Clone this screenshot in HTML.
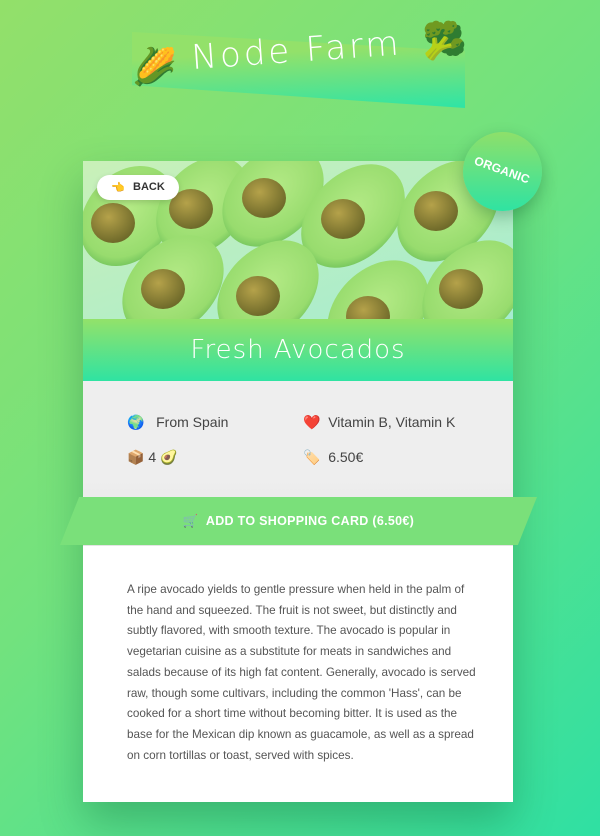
<!DOCTYPE html>
<html><head><meta charset="utf-8"><style>
*{margin:0;padding:0;box-sizing:border-box}
body{width:600px;height:836px;overflow:hidden;font-family:"Liberation Sans","Noto Sans CJK JP",sans-serif;background:linear-gradient(135deg,#93e06a 0%,#72e27e 45%,#2fe0a3 100%);position:relative}
.banner{position:absolute;left:132px;top:32px;width:333px;height:76px;background:linear-gradient(177deg,#93e16a 30%,#2ee4a6 100%);clip-path:polygon(0 0,100% 25%,100% 100%,0 70%)}
.logo{position:absolute;left:193px;top:38px;color:#fff;font-size:34px;letter-spacing:3px;transform:rotate(-4deg);transform-origin:left bottom;font-family:"DejaVu Sans",sans-serif;font-weight:200;white-space:nowrap}
.emo{position:absolute;font-family:"Noto Color Emoji","DejaVu Sans",sans-serif}
.card{position:absolute;left:83px;top:161px;width:430px;height:641px;background:#fff;box-shadow:0 20px 40px rgba(0,80,40,.3)}
.img{position:absolute;left:0;top:0;width:430px;height:158px;overflow:hidden;background:linear-gradient(160deg,#c9f0b8,#a5ecd0)}
.title{position:absolute;left:0;top:158px;width:430px;height:62px;background:linear-gradient(180deg,#93e26a,#2fe3a2);color:#fff;text-align:center;font-size:26px;line-height:62px;letter-spacing:1px;font-family:"DejaVu Sans",sans-serif;font-weight:200}
.info{position:absolute;left:0;top:220px;width:430px;height:165px;background:linear-gradient(180deg,#eeeeee 60%,#e4e4e4);color:#444;font-size:14px}
.info div{position:absolute}
.btn{position:absolute;left:60px;top:497px;width:477px;height:48px;background:#7ae07a;clip-path:polygon(4% 0,100% 0,96% 100%,0 100%);color:#fff;font-weight:bold;font-size:12.5px;text-align:center;line-height:48px;letter-spacing:.3px}
.desc{position:absolute;left:44px;top:419px;width:350px;font-size:11.7px;line-height:20.7px;color:#555;white-space:nowrap}
.back{position:absolute;left:97px;top:175px;width:82px;height:25px;background:#fff;border-radius:13px;font-size:11px;font-weight:bold;color:#333;line-height:25px;padding-left:36px;box-shadow:0 2px 6px rgba(0,0,0,.15)}
.org{position:absolute;left:463px;top:132px;width:79px;height:79px;border-radius:50%;background:linear-gradient(180deg,#8ee06a,#2fe3a2);box-shadow:0 6px 16px rgba(0,80,40,.3);color:#fff;font-weight:bold;font-size:12px}
.org span{position:absolute;left:10px;top:31px;transform:rotate(20deg);letter-spacing:.2px}
</style></head><body>
<div class="banner"></div>
<div class="logo">Node Farm</div>
<div class="emo" style="left:132px;top:46px;font-size:36px">🌽</div>
<div class="emo" style="left:422px;top:20px;font-size:36px">🥦</div>
<div class="card">
 <div class="img"><svg width="430" height="158">
  <defs><radialGradient id="p" cx="40%" cy="35%" r="65%"><stop offset="0" stop-color="#b5a24a"/><stop offset="1" stop-color="#6f6a2a"/></radialGradient>
  <radialGradient id="f" cx="45%" cy="45%" r="60%"><stop offset="0" stop-color="#b4ea86"/><stop offset="0.8" stop-color="#98dc6e"/><stop offset="1" stop-color="#6fc25a"/></radialGradient></defs>
  <g fill="url(#f)">
   <ellipse cx="45" cy="55" rx="42" ry="55" transform="rotate(40 45 55)"/>
   <ellipse cx="120" cy="45" rx="40" ry="55" transform="rotate(40 120 45)"/>
   <ellipse cx="190" cy="35" rx="42" ry="58" transform="rotate(45 190 35)"/>
   <ellipse cx="270" cy="55" rx="42" ry="60" transform="rotate(45 270 55)"/>
   <ellipse cx="365" cy="50" rx="42" ry="58" transform="rotate(45 365 50)"/>
   <ellipse cx="90" cy="125" rx="42" ry="58" transform="rotate(45 90 125)"/>
   <ellipse cx="185" cy="130" rx="42" ry="58" transform="rotate(45 185 130)"/>
   <ellipse cx="295" cy="150" rx="42" ry="58" transform="rotate(45 295 150)"/>
   <ellipse cx="390" cy="130" rx="42" ry="58" transform="rotate(45 390 130)"/>
  </g>
  <g fill="url(#p)">
   <ellipse cx="30" cy="62" rx="22" ry="20"/><ellipse cx="108" cy="48" rx="22" ry="20"/>
   <ellipse cx="181" cy="37" rx="22" ry="20"/><ellipse cx="260" cy="58" rx="22" ry="20"/>
   <ellipse cx="353" cy="50" rx="22" ry="20"/><ellipse cx="80" cy="128" rx="22" ry="20"/>
   <ellipse cx="175" cy="135" rx="22" ry="20"/><ellipse cx="285" cy="155" rx="22" ry="20"/>
   <ellipse cx="378" cy="128" rx="22" ry="20"/>
  </g></svg></div>
 <div class="title">Fresh Avocados</div>
 <div class="info">
  <div style="left:44px;top:33px"><span class="emo" style="position:static">🌍</span>&nbsp;&nbsp; From Spain</div>
  <div style="left:220px;top:33px"><span class="emo" style="position:static;color:#e22">❤️</span>&nbsp; Vitamin B, Vitamin K</div>
  <div style="left:44px;top:68px"><span class="emo" style="position:static">📦</span>&nbsp;4 <span class="emo" style="position:static">🥑</span></div>
  <div style="left:220px;top:68px"><span class="emo" style="position:static">🏷️</span>&nbsp; 6.50€</div>
 </div>
 <div class="desc">A ripe avocado yields to gentle pressure when held in the palm of<br>the hand and squeezed. The fruit is not sweet, but distinctly and<br>subtly flavored, with smooth texture. The avocado is popular in<br>vegetarian cuisine as a substitute for meats in sandwiches and<br>salads because of its high fat content. Generally, avocado is served<br>raw, though some cultivars, including the common 'Hass', can be<br>cooked for a short time without becoming bitter. It is used as the<br>base for the Mexican dip known as guacamole, as well as a spread<br>on corn tortillas or toast, served with spices.</div>
</div>
<div class="btn">🛒&nbsp; ADD TO SHOPPING CARD (6.50€)</div>
<div class="back"><span class="emo" style="left:14px;top:0">👈</span>BACK</div>
<div class="org"><span>ORGANIC</span></div>
</body></html>
